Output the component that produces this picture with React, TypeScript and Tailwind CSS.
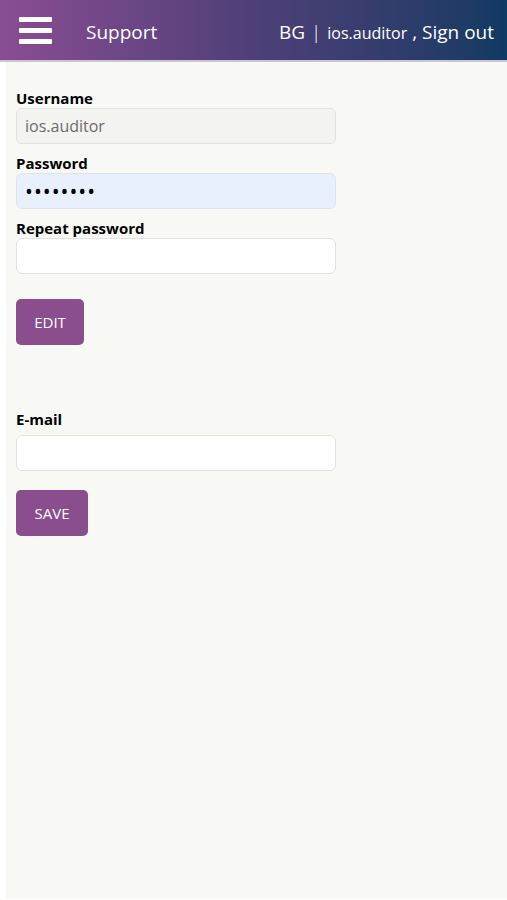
import React from 'react';

const font = { fontFamily: '"Open Sans", "Noto Sans", sans-serif' };

const Field: React.FC<{ label: string; children: React.ReactNode }> = ({ label, children }) => (
  <div>
    <div className="text-[15px] font-bold text-black leading-[20px] h-[20px]">{label}</div>
    {children}
  </div>
);

export default function App() {
  return (
    <div className="w-[507px] h-[900px] bg-white flex flex-col" style={font}>
      {/* Header */}
      <div className="h-[62px] shrink-0 flex items-center bg-gradient-to-r from-[#8a4d92] via-[#4e3f78] to-[#0f3a62] border-b-2 border-[#c9c4d6]">
        <div className="ml-[19px] w-[33px] flex flex-col gap-[6px]">
          <span className="block h-[5px] bg-white rounded-[1px]" />
          <span className="block h-[5px] bg-white rounded-[1px]" />
          <span className="block h-[5px] bg-white rounded-[1px]" />
        </div>
        <span className="ml-[34px] mt-[5px] text-white text-[19px]">Support</span>
        <div className="ml-auto mr-[13px] mt-[5px] text-white text-[19px] flex items-baseline">
          <span>BG</span>
          <span className="mx-[6px] font-light">|</span>
          <span className="text-[16px]">ios.auditor</span>
          <span className="ml-[5px]">, Sign out</span>
        </div>
      </div>

      {/* Content */}
      <div className="flex-1 ml-[6px] mb-[1px] bg-[#f8f8f5] px-[10px] pt-[26px]">
        <div className="w-[320px] flex flex-col gap-[9px]">
          <Field label="Username">
            <input
              disabled
              value="ios.auditor"
              readOnly
              className="w-full h-[36px] rounded-[6px] border border-[#e2e2e0] bg-[#f3f3f0] px-[8px] text-[16px] text-[#6b6b6b] outline-none"
            />
          </Field>
          <Field label="Password">
            <input
              type="password"
              value="password"
              readOnly
              className="w-full h-[36px] rounded-[6px] border border-[#dfe3ec] bg-[#e8f0fe] px-[8px] text-[21px] text-black outline-none tracking-[1px]"
            />
          </Field>
          <Field label="Repeat password">
            <input className="w-full h-[36px] rounded-[6px] border border-[#e2e2e0] bg-white px-[8px] text-[16px] outline-none" />
          </Field>
        </div>

        <button className="mt-[25px] h-[46px] w-[68px] rounded-[5px] bg-[#8a4e8f] text-white text-[15px]">
          EDIT
        </button>

        <div className="mt-[64px] w-[320px]">
          <Field label="E-mail">
            <input className="mt-[6px] w-full h-[36px] rounded-[6px] border border-[#e2e2e0] bg-white px-[8px] text-[16px] outline-none" />
          </Field>
        </div>

        <button className="mt-[19px] h-[46px] w-[72px] rounded-[5px] bg-[#8a4e8f] text-white text-[15px]">
          SAVE
        </button>
      </div>
    </div>
  );
}
